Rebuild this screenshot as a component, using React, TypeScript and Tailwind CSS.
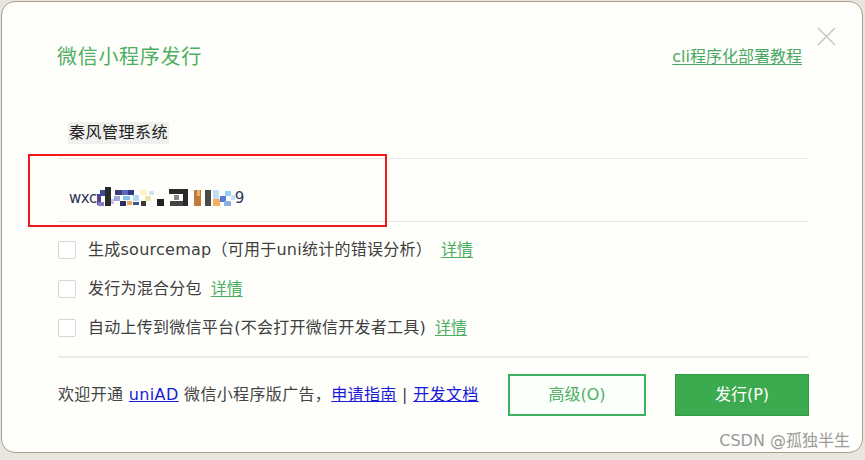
const FONT = '"DejaVu Sans", "Noto Sans CJK SC", sans-serif';

// mosaic blocks that hide the appid
const blocks: [number, number, number, number, string][] = [
  [0, 7, 4, 11, "#5a3f8f"],
  [3, 3, 5, 6, "#3b4a9c"],
  [1, 15, 6, 4, "#8a7ad0"],
  [8, 0, 6, 19, "#2a2a2a"],
  [14, 12, 3, 5, "#c8c0e8"],
  [18, 3, 7, 5, "#3b3f7a"],
  [17, 9, 6, 5, "#9aa8e0"],
  [23, 14, 6, 5, "#2a2f6a"],
  [25, 3, 6, 5, "#5a6ab8"],
  [26, 9, 7, 4, "#7fc0ef"],
  [31, 3, 6, 5, "#2d3a8a"],
  [30, 14, 5, 4, "#f0a860"],
  [36, 8, 6, 6, "#b8d8f4"],
  [36, 15, 6, 3, "#40508a"],
  [43, 3, 7, 5, "#fff2c0"],
  [48, 9, 6, 5, "#eee4b0"],
  [44, 14, 5, 5, "#3a3a3a"],
  [52, 4, 5, 4, "#d8e0f0"],
  [60, 12, 7, 7, "#222"],
  [72, 2, 19, 5, "#2a2a2a"],
  [86, 2, 5, 17, "#2a2a2a"],
  [73, 14, 13, 5, "#444"],
  [77, 8, 5, 5, "#888"],
  [97, 3, 7, 16, "#c07a3a"],
  [100, 3, 3, 6, "#e8b070"],
  [108, 3, 6, 16, "#4a4a4a"],
  [116, 3, 6, 9, "#c4dcf4"],
  [116, 12, 7, 7, "#f2b060"],
  [123, 9, 6, 6, "#5a7ad8"],
  [128, 4, 6, 5, "#9ad0f4"],
  [127, 14, 7, 5, "#8ab0e0"],
  [134, 8, 4, 5, "#c0e4f8"],
];

function Mosaic() {
  return (
    <svg width="138" height="22" viewBox="0 0 138 22">
      {blocks.map(([x, y, w, h, c], i) => (
        <rect key={i} x={x} y={y} width={w} height={h} fill={c} />
      ))}
    </svg>
  );
}

function CheckRow({ label }: { label: string }) {
  return (
    <div className="flex h-[39px] items-center">
      <span className="h-[18px] w-[18px] rounded-[2px] border border-[#d6d6d6] bg-white" />
      <span className="ml-[12px] text-[16px] tracking-[0.25px] text-[#3f3f3f]">{label}</span>
      <a className="ml-[9px] text-[16px] text-[#4cae63] underline underline-offset-2">详情</a>
    </div>
  );
}

export default function App() {
  return (
    <div className="h-[460px] w-[865px] overflow-hidden bg-[#e9e6df]" style={{ fontFamily: FONT }}>
      <div className="relative ml-[1px] mt-[1px] h-[452px] w-[862px] rounded-[14px] border border-[#aaa18c] bg-[#fefefb]">
        {/* close */}
        <svg className="absolute right-[26px] top-[25px]" width="19" height="19" viewBox="0 0 19 19">
          <path d="M1 1 L18 18 M18 1 L1 18" stroke="#c4c4c4" strokeWidth="1.4" />
        </svg>

        {/* header */}
        <div className="flex items-center justify-between pl-[55px] pr-[60px] pt-[41px]">
          <h1 className="text-[20px] leading-[28px] tracking-[0.7px] text-[#4fae5f]">微信小程序发行</h1>
          <a className="text-[16px] leading-[28px] text-[#48a862] underline underline-offset-2">cli程序化部署教程</a>
        </div>

        {/* fields */}
        <div className="ml-[56px] mr-[53px] mt-[37px]">
          <div className="flex h-[51px] items-center border-b border-[#e6e6e6] pl-[10px]">
            <span className="bg-[#f0f0ee] px-[1px] text-[16px] leading-[22px] tracking-[0.5px] text-[#222]">
              秦风管理系统
            </span>
          </div>
          <div className="flex h-[63px] items-center border-b border-[#e6e6e6] pl-[11px] pt-[16px]">
            <span className="text-[15px] tracking-[-0.5px] text-[#2d3556]">wxc</span>
            <Mosaic />
            <span className="text-[15px] text-[#2d3556]">9</span>
          </div>
        </div>

        {/* annotation */}
        <div className="absolute left-[26px] top-[152px] h-[73px] w-[359px] border-2 border-[#f01818]" />

        {/* options */}
        <div className="ml-[56px] mt-[8px]">
          <CheckRow label="生成sourcemap（可用于uni统计的错误分析）" />
          <CheckRow label="发行为混合分包" />
          <CheckRow label="自动上传到微信平台(不会打开微信开发者工具)" />
        </div>

        <div className="ml-[56px] mr-[53px] mt-[9px] border-t-2 border-[#ececec]" />

        {/* footer */}
        <div className="ml-[56px] mr-[53px] mt-[16px] flex items-center">
          <p className="text-[16px] tracking-[0.35px] text-[#444]">
            欢迎开通 <a className="text-[#1a1ad8] underline">uniAD</a> 微信小程序版广告，
            <a className="text-[#1a1ad8] underline">申请指南</a> | <a className="text-[#1a1ad8] underline">开发文档</a>
          </p>
          <button className="ml-auto h-[42px] w-[138px] border-2 border-[#3fb062] bg-[#fafffb] text-[16px] text-[#4fae62]">
            高级(O)
          </button>
          <button className="ml-[29px] h-[42px] w-[134px] border border-[#2f9c44] bg-[#3caa4f] text-[16px] text-white">
            发行(P)
          </button>
        </div>

        {/* watermark */}
        <span className="absolute right-[12px] top-[427px] text-[16px] text-[#9a9a9a]">CSDN @孤独半生</span>
      </div>
    </div>
  );
}
